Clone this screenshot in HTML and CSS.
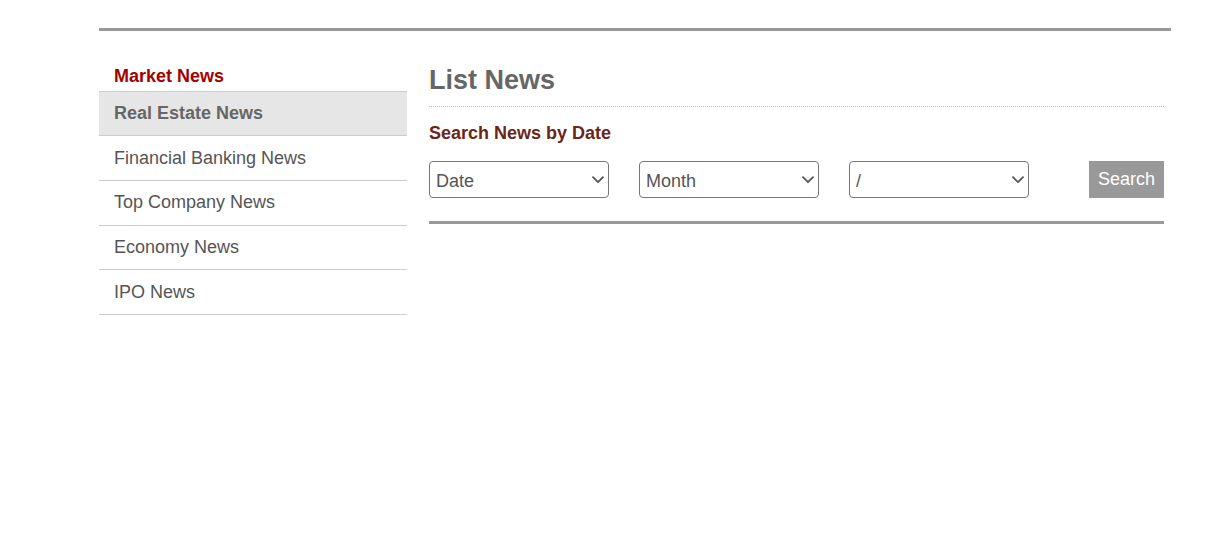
FILE: index.html
```html
<!DOCTYPE html>
<html lang="en">
<head>
<meta charset="utf-8">
<title>List News</title>
<link rel="stylesheet" href="styles.css">
</head>
<body>
<div class="page">
  <div class="top-rule"></div>
  <div class="content">
    <aside class="sidebar">
      <h3 class="side-title">Market News</h3>
      <ul class="side-menu">
        <li class="side-item active"><a href="#">Real Estate News</a></li>
        <li class="side-item"><a href="#">Financial Banking News</a></li>
        <li class="side-item"><a href="#">Top Company News</a></li>
        <li class="side-item"><a href="#">Economy News</a></li>
        <li class="side-item"><a href="#">IPO News</a></li>
      </ul>
    </aside>
    <main class="main">
      <h1 class="page-title">List News</h1>
      <h2 class="search-title">Search News by Date</h2>
      <form class="search-form">
        <div class="sel-wrap">
          <select class="sel"><option>Date</option></select>
          <svg class="chev" width="12" height="8" viewBox="0 0 12 8"><path d="M1 1.2 L6 6.2 L11 1.2" fill="none" stroke="#555" stroke-width="1.8" stroke-linecap="round" stroke-linejoin="round"/></svg>
        </div>
        <div class="sel-wrap">
          <select class="sel"><option>Month</option></select>
          <svg class="chev" width="12" height="8" viewBox="0 0 12 8"><path d="M1 1.2 L6 6.2 L11 1.2" fill="none" stroke="#555" stroke-width="1.8" stroke-linecap="round" stroke-linejoin="round"/></svg>
        </div>
        <div class="sel-wrap">
          <select class="sel"><option>/</option></select>
          <svg class="chev" width="12" height="8" viewBox="0 0 12 8"><path d="M1 1.2 L6 6.2 L11 1.2" fill="none" stroke="#555" stroke-width="1.8" stroke-linecap="round" stroke-linejoin="round"/></svg>
        </div>
        <button type="button" class="search-btn">Search</button>
      </form>
      <div class="bottom-rule"></div>
    </main>
  </div>
</div>
</body>
</html>
```

FILE: styles.css
```css
html, body {
  margin: 0;
  padding: 0;
  background: #fff;
  font-family: "Liberation Sans", Arial, sans-serif;
}

.page {
  width: 1072px;
  padding-top: 28px;
  margin-left: 99px;
}

.top-rule {
  border-top: 3px solid #999;
}

.content {
  display: flex;
  margin-top: 30px;
}

.sidebar {
  width: 308px;
  flex: none;
}

.side-title {
  margin: 4.5px 0 4px 15px;
  font-size: 18px;
  line-height: 21px;
  font-weight: bold;
  color: #a30000;
}

.side-menu {
  list-style: none;
  margin: 0;
  padding: 0;
  border-top: 1px solid #ccc;
}

.side-item {
  border-bottom: 1px solid #ccc;
}

.side-item a {
  display: flex;
  align-items: center;
  height: 43.7px;
  padding-left: 15px;
  font-size: 18px;
  color: #555;
  text-decoration: none;
}

.side-item.active a {
  background: #e6e6e6;
  font-weight: bold;
  color: #666;
}

.main {
  width: 735px;
  margin-left: 22px;
}

.page-title {
  margin: 4px 0 0;
  padding-bottom: 10px;
  border-bottom: 1px dotted #bbb;
  font-size: 27px;
  line-height: 31px;
  font-weight: bold;
  color: #666;
}

.search-title {
  margin: 16px 0 0;
  font-size: 18px;
  line-height: 21px;
  font-weight: bold;
  color: #6b2618;
}

.search-form {
  display: flex;
  gap: 30px;
  margin-top: 17px;
}

.sel-wrap {
  position: relative;
  width: 180px;
  height: 37px;
}

.sel {
  appearance: none;
  -webkit-appearance: none;
  box-sizing: border-box;
  width: 180px;
  height: 37px;
  margin: 0;
  border: 1px solid #767676;
  border-radius: 4px;
  font-family: "Liberation Sans", Arial, sans-serif;
  font-size: 18px;
  color: #555;
  padding: 3px 24px 0 6px;
  background: #fff;
}

.chev {
  position: absolute;
  right: 5px;
  top: 14.5px;
  pointer-events: none;
}

.search-btn {
  margin-left: auto;
  width: 75px;
  height: 37px;
  border: none;
  background: #999;
  color: #fff;
  font-family: "Liberation Sans", Arial, sans-serif;
  font-size: 18px;
  padding: 0;
}

.bottom-rule {
  margin-top: 23px;
  border-top: 3px solid #999;
}
```
